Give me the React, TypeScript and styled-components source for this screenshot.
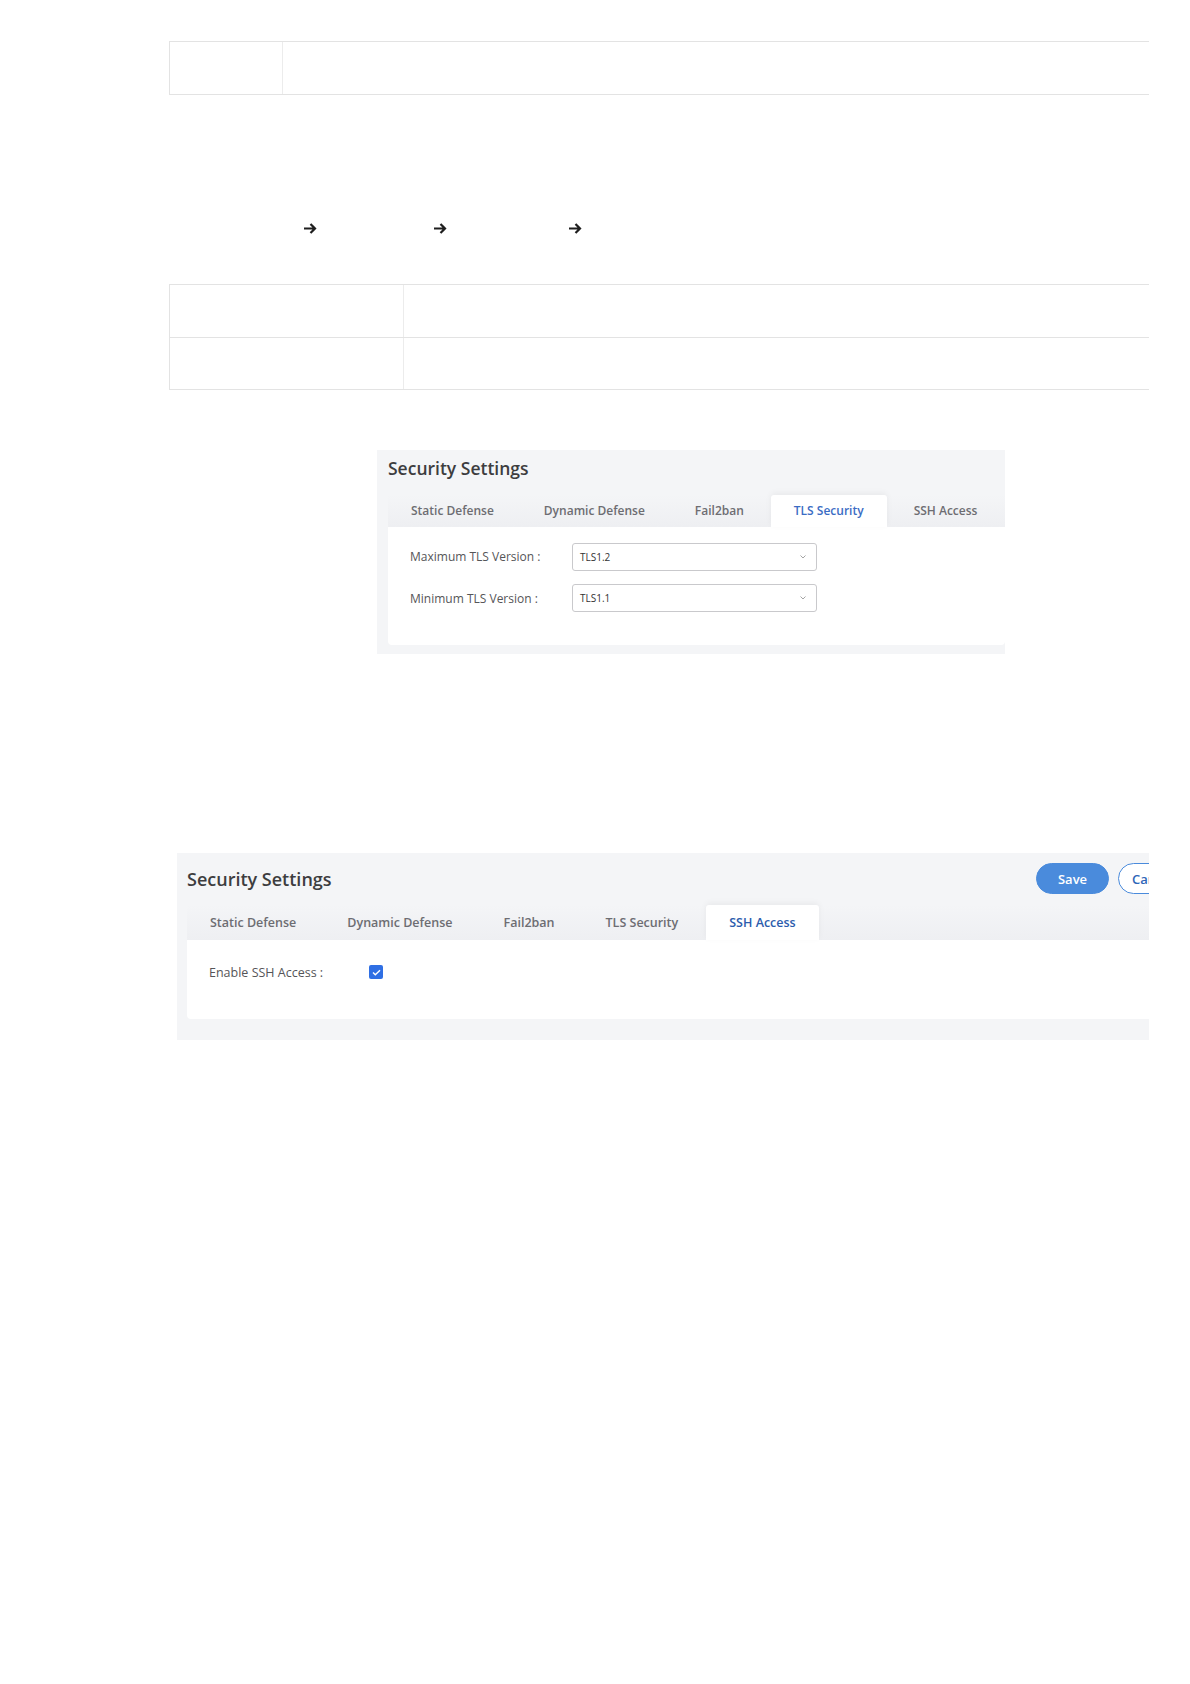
import React from "react";
import styled, { createGlobalStyle } from "styled-components";

// global ===============================================
const GlobalStyle = createGlobalStyle`
  html, body {
    margin: 0;
    padding: 0;
    background: #ffffff;
  }
  body {
    font-family: "Open Sans", "Noto Sans", Arial, sans-serif;
    min-height: 1684px;
  }
`;

// page ==================================================
const Page = styled.div`
  width: 980px;
  margin-left: 169px;
  padding-top: 41px;
  overflow: hidden;
`;

const Table = styled.div<{ $gap: number }>`
  width: 1010px;
  margin-top: ${(p) => p.$gap}px;
  border-top: 1px solid #e3e3e3;
  border-left: 1px solid #e3e3e3;
`;

const Row = styled.div<{ $first: number; $height: number }>`
  display: grid;
  grid-template-columns: ${(p) => p.$first}px 1fr;
  height: ${(p) => p.$height}px;
  border-bottom: 1px solid #e3e3e3;
  box-sizing: border-box;
`;

const Cell = styled.div`
  & + & {
    border-left: 1px solid #ececec;
  }
`;

const Crumbs = styled.div`
  display: flex;
  align-items: center;
  height: 20px;
  margin-top: 123px;
`;

const Crumb = styled.span<{ $w: number }>`
  display: inline-block;
  width: ${(p) => p.$w}px;
  height: 20px;
`;

const Arrow = styled.svg`
  display: block;
  width: 14px;
  height: 11px;
  flex: 0 0 auto;
`;

// settings screenshot ===================================
const Panel = styled.div<{ $w: number; $gap: number; $left: number; $pad: string }>`
  width: ${(p) => p.$w}px;
  margin-top: ${(p) => p.$gap}px;
  margin-left: ${(p) => p.$left}px;
  padding: ${(p) => p.$pad};
  background: #f4f5f7;
  box-sizing: border-box;
`;

const PanelHead = styled.div<{ $h: number }>`
  display: flex;
  align-items: center;
  justify-content: space-between;
  height: ${(p) => p.$h}px;
`;

const Title = styled.h2<{ $size: number }>`
  margin: 0;
  font-size: ${(p) => p.$size}px;
  font-weight: 600;
  color: #3d3d3f;
  line-height: 26px;
`;

const Actions = styled.div`
  display: flex;
  gap: 9px;
`;

const Button = styled.button<{ $primary?: boolean }>`
  width: 73px;
  height: 31px;
  border-radius: 16px;
  font-family: inherit;
  font-size: 13px;
  font-weight: 600;
  border: 1px solid #4a8bdc;
  background: ${(p) => (p.$primary ? "#4a8bdc" : "#ffffff")};
  color: ${(p) => (p.$primary ? "#ffffff" : "#2f66b8")};
  padding: 0;
  text-align: ${(p) => (p.$primary ? "center" : "left")};
  padding-left: ${(p) => (p.$primary ? 0 : 13)}px;
`;

const TabBar = styled.div<{ $gap: number; $h: number; $spacing: number }>`
  display: flex;
  gap: ${(p) => p.$spacing}px;
  margin-top: ${(p) => p.$gap}px;
  height: ${(p) => p.$h}px;
  background: linear-gradient(#f4f5f7, #eeeff2);
`;

const Tab = styled.div<{ $active: boolean; $size: number; $blue: string }>`
  display: flex;
  align-items: center;
  padding: 0 23px 1px;
  font-size: ${(p) => p.$size}px;
  font-weight: 600;
  color: ${(p) => (p.$active ? p.$blue : "#6d6d72")};
  background: ${(p) => (p.$active ? "#ffffff" : "transparent")};
  border-radius: 3px 3px 0 0;
  box-shadow: ${(p) => (p.$active ? "0 -2px 6px rgba(0,0,0,0.05)" : "none")};
  white-space: nowrap;
`;

const Card = styled.div<{ $h: number; $pad: string }>`
  height: ${(p) => p.$h}px;
  padding: ${(p) => p.$pad};
  background: #ffffff;
  border-radius: 0 0 4px 4px;
  box-sizing: border-box;
  display: flex;
  flex-direction: column;
  gap: 13px;
`;

const Field = styled.div<{ $label: number; $h: number }>`
  display: grid;
  grid-template-columns: ${(p) => p.$label}px auto;
  align-items: center;
  height: ${(p) => p.$h}px;
  justify-content: start;
`;

const Label = styled.span<{ $size: number }>`
  font-size: ${(p) => p.$size}px;
  color: #555558;
  white-space: nowrap;
`;

const Select = styled.div`
  width: 245px;
  height: 28px;
  border: 1px solid #c9c9cc;
  border-radius: 3px;
  box-sizing: border-box;
  display: flex;
  align-items: center;
  justify-content: space-between;
  padding: 0 10px 0 7px;
  font-size: 10px;
  color: #333;
  background: #fff;
`;

const Chevron = styled.svg`
  width: 6px;
  height: 4px;
`;

const Check = styled.span`
  width: 14px;
  height: 14px;
  border-radius: 2px;
  background: #2f6fe4;
  display: flex;
  align-items: center;
  justify-content: center;
`;

const TABS = ["Static Defense", "Dynamic Defense", "Fail2ban", "TLS Security", "SSH Access"];

function ArrowIcon() {
  return (
    <Arrow viewBox="0 0 14 11">
      <path d="M1 5.5h11M7.5 1l4.5 4.5L7.5 10" fill="none" stroke="#1e1e1e" strokeWidth="2.2" strokeLinejoin="miter" />
    </Arrow>
  );
}

function SelectBox({ value }: { value: string }) {
  return (
    <Select>
      <span>{value}</span>
      <Chevron viewBox="0 0 6 4">
        <path d="M0.5 0.5l2.5 2.5 2.5-2.5" fill="none" stroke="#9a9a9a" strokeWidth="0.9" />
      </Chevron>
    </Select>
  );
}

export default function App() {
  return (
    <>
      <GlobalStyle />
      <Page>
        <Table $gap={0}>
          <Row $first={112} $height={53}>
            <Cell />
            <Cell />
          </Row>
        </Table>

        <Crumbs>
          <Crumb $w={134} />
          <ArrowIcon />
          <Crumb $w={116} />
          <ArrowIcon />
          <Crumb $w={121} />
          <ArrowIcon />
        </Crumbs>

        <Table $gap={46}>
          <Row $first={233} $height={53}>
            <Cell />
            <Cell />
          </Row>
          <Row $first={233} $height={52}>
            <Cell />
            <Cell />
          </Row>
        </Table>

        <Panel $w={628} $gap={60} $left={208} $pad="0 0 9px 11px">
          <PanelHead $h={36}>
            <Title $size={17.5}>Security Settings</Title>
          </PanelHead>
          <TabBar $gap={9} $h={32} $spacing={4}>
            {TABS.map((t) => (
              <Tab key={t} $active={t === "TLS Security"} $size={12} $blue="#3b6cc4">
                {t}
              </Tab>
            ))}
          </TabBar>
          <Card $h={118} $pad="15px 22px">
            <Field $label={162} $h={29}>
              <Label $size={12}>Maximum TLS Version :</Label>
              <SelectBox value="TLS1.2" />
            </Field>
            <Field $label={162} $h={28}>
              <Label $size={12}>Minimum TLS Version :</Label>
              <SelectBox value="TLS1.1" />
            </Field>
          </Card>
        </Panel>

        <Panel $w={1024} $gap={199} $left={8} $pad="10px 10px 21px 10px">
          <PanelHead $h={31}>
            <Title $size={18}>Security Settings</Title>
            <Actions>
              <Button $primary>Save</Button>
              <Button>Cancel</Button>
            </Actions>
          </PanelHead>
          <TabBar $gap={11} $h={35} $spacing={5}>
            {TABS.map((t) => (
              <Tab key={t} $active={t === "SSH Access"} $size={12.5} $blue="#2c5cad">
                {t}
              </Tab>
            ))}
          </TabBar>
          <Card $h={79} $pad="22px 22px">
            <Field $label={160} $h={20}>
              <Label $size={12.5}>Enable SSH Access :</Label>
              <Check>
                <svg width="9" height="7" viewBox="0 0 9 7">
                  <path d="M1 3.6l2.3 2.2L8 1.2" fill="none" stroke="#fff" strokeWidth="1.4" />
                </svg>
              </Check>
            </Field>
          </Card>
        </Panel>
      </Page>
    </>
  );
}
